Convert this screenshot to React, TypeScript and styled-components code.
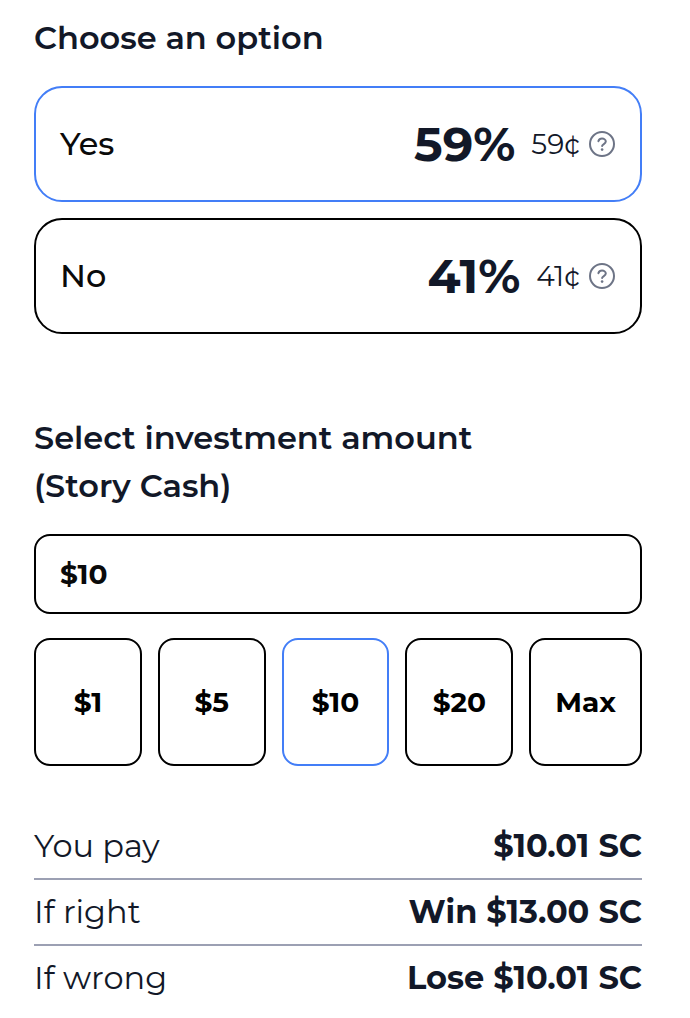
import React, { useState } from "react";
import styled, { createGlobalStyle } from "styled-components";

const ink = "#121828";
const blue = "#437ef7";
const rule = "#9ca0b3";

const GlobalStyle = createGlobalStyle`
  *, *::before, *::after { box-sizing: border-box; }
  body {
    margin: 0;
    background: #fff;
    color: ${ink};
    font-family: Montserrat, Inter, sans-serif;
  }
  button, input { font: inherit; color: inherit; }
`;

const Panel = styled.main`
  display: flex;
  flex-direction: column;
  padding: 14px 48px 8px 34px;
`;

const Section = styled.section`
  display: flex;
  flex-direction: column;
  gap: 24px;
  margin-bottom: 80px;
`;

const AmountSection = styled(Section)`
  margin-bottom: 48px;
`;

const Heading = styled.h2`
  margin: 0;
  max-width: 480px;
  font-size: 32px;
  line-height: 48px;
  font-weight: 600;
`;

const OptionList = styled.div`
  display: flex;
  flex-direction: column;
  gap: 16px;
`;

const OptionCard = styled.div<{ $selected: boolean }>`
  display: flex;
  align-items: center;
  height: 116px;
  padding: 0 24px;
  border: 2px solid ${(p) => (p.$selected ? blue : "#000")};
  border-radius: 28px;
`;

const OptionLabel = styled.label`
  display: flex;
  flex: 1;
  align-items: center;
  height: 100%;
  cursor: pointer;
`;

const OptionRadio = styled.input`
  appearance: none;
  width: 0;
  height: 0;
  margin: 0;
`;

const OptionName = styled.span`
  flex: 1;
  color: #0a0a0a;
  font-size: 32px;
  line-height: 48px;
  font-weight: 500;
`;

const Percent = styled.strong`
  margin-right: 16px;
  font-size: 48px;
  line-height: 56px;
  font-weight: 700;
`;

const Price = styled.span`
  font-size: 28px;
  line-height: 40px;
  font-weight: 400;
`;

const HelpButton = styled.button`
  display: flex;
  margin-left: 8px;
  padding: 0;
  border: 0;
  background: none;
  color: #6d7486;
  cursor: pointer;
`;

const AmountInput = styled.input`
  width: 100%;
  height: 80px;
  padding: 0 24px;
  border: 2px solid #000;
  border-radius: 16px;
  background: #fff;
  color: #0a0a0a;
  font-size: 28px;
  font-weight: 700;
`;

const PresetRow = styled.div`
  display: flex;
  gap: 16px;
`;

const PresetButton = styled.button<{ $selected: boolean }>`
  flex: 1 1 0;
  height: 128px;
  padding: 0 24px;
  border: 2px solid ${(p) => (p.$selected ? blue : "#000")};
  border-radius: 16px;
  background: #fff;
  color: #000;
  font-size: 28px;
  line-height: 40px;
  font-weight: 700;
  cursor: pointer;
`;

const Summary = styled.dl`
  margin: 0;
`;

const SummaryRow = styled.div`
  display: flex;
  justify-content: space-between;
  padding: 8px 0;
  font-size: 32px;
  line-height: 48px;

  & + & {
    border-top: 2px solid ${rule};
  }
`;

const Term = styled.dt`
  font-weight: 400;
`;

const Value = styled.dd`
  margin: 0;
  font-weight: 700;
`;

function HelpIcon() {
  return (
    <svg width="28" height="28" viewBox="0 0 28 28" fill="none" stroke="currentColor" strokeWidth="2" strokeLinecap="round" strokeLinejoin="round" aria-hidden="true">
      <circle cx="14" cy="14" r="12" />
      <path d="M10.4 11.2c.6-1.7 1.9-2.6 3.6-2.6 2.1 0 3.8 1.3 3.8 3 0 2.3-3.7 2.5-3.7 4.4" />
      <circle cx="14.1" cy="19.6" r="1.3" fill="currentColor" stroke="none" />
    </svg>
  );
}

const options = [
  { name: "Yes", percent: "59%", price: "59¢" },
  { name: "No", percent: "41%", price: "41¢" },
];

const presets = ["$1", "$5", "$10", "$20", "Max"];

const summary = [
  { term: "You pay", value: "$10.01 SC" },
  { term: "If right", value: "Win $13.00 SC" },
  { term: "If wrong", value: "Lose $10.01 SC" },
];

export default function App() {
  const [choice, setChoice] = useState("Yes");
  const [amount, setAmount] = useState("$10");

  return (
    <>
      <GlobalStyle />
      <Panel>
        <Section>
          <Heading id="option-heading">Choose an option</Heading>
          <OptionList role="radiogroup" aria-labelledby="option-heading">
            {options.map((o) => (
              <OptionCard key={o.name} $selected={choice === o.name}>
                <OptionLabel>
                  <OptionRadio type="radio" name="option" checked={choice === o.name} onChange={() => setChoice(o.name)} />
                  <OptionName>{o.name}</OptionName>
                  <Percent>{o.percent}</Percent>
                  <Price>{o.price}</Price>
                </OptionLabel>
                <HelpButton type="button" aria-label={`About the ${o.name} price`}>
                  <HelpIcon />
                </HelpButton>
              </OptionCard>
            ))}
          </OptionList>
        </Section>

        <AmountSection>
          <Heading>
            <label htmlFor="amount">Select investment amount (Story Cash)</label>
          </Heading>
          <AmountInput id="amount" type="text" value={amount} onChange={(e) => setAmount(e.target.value)} />
          <PresetRow>
            {presets.map((p) => (
              <PresetButton key={p} type="button" $selected={amount === p} aria-pressed={amount === p} onClick={() => setAmount(p)}>
                {p}
              </PresetButton>
            ))}
          </PresetRow>
        </AmountSection>

        <Summary>
          {summary.map((s) => (
            <SummaryRow key={s.term}>
              <Term>{s.term}</Term>
              <Value>{s.value}</Value>
            </SummaryRow>
          ))}
        </Summary>
      </Panel>
    </>
  );
}
